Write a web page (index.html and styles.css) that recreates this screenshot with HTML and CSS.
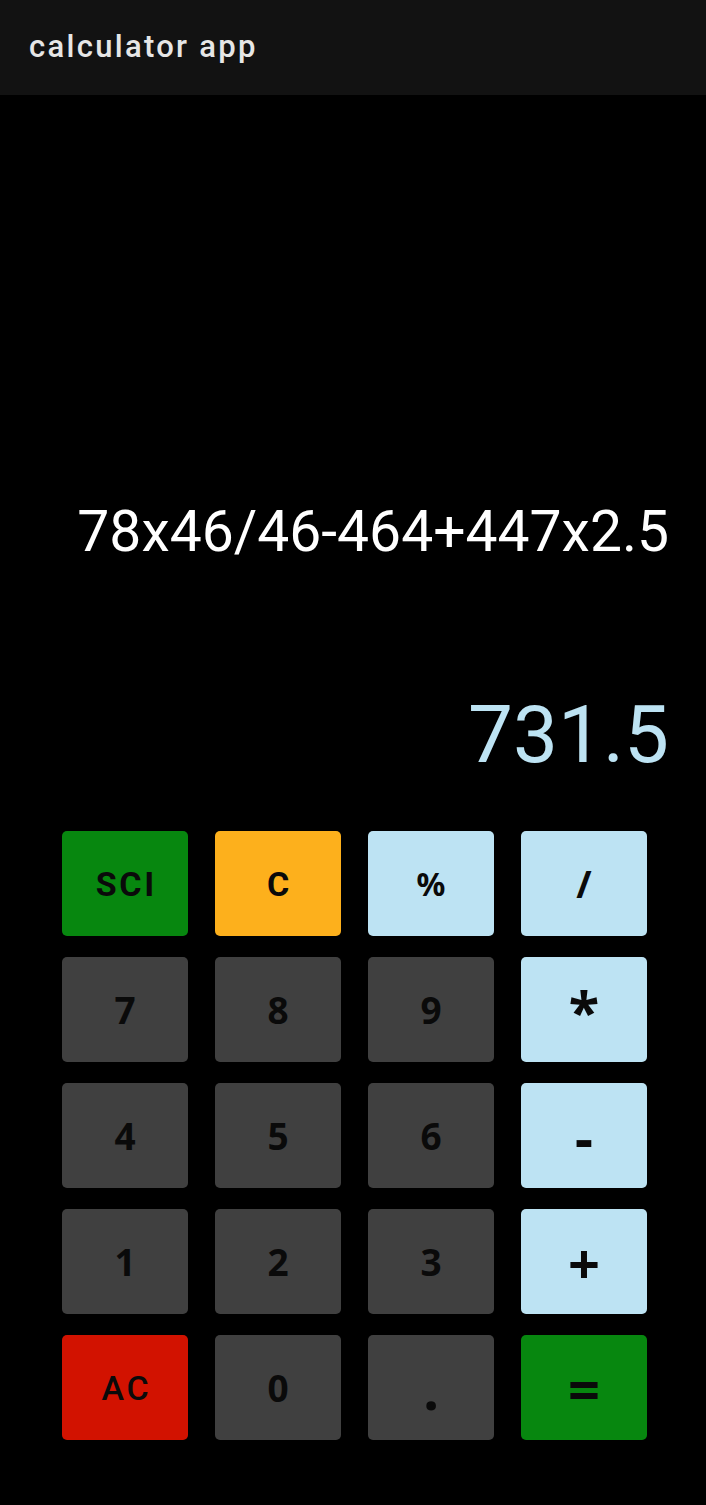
FILE: index.html
```html
<!DOCTYPE html>
<html lang="en">
<head>
<meta charset="utf-8">
<title>calculator app</title>
<link rel="stylesheet" href="styles.css">
</head>
<body>
<header class="app-bar">
  <h1 class="app-title">calculator app</h1>
</header>
<main class="calculator">
  <section class="display">
    <div class="expression">78x46/46-464+447x2.5</div>
    <div class="result">731.5</div>
  </section>
  <section class="keypad">
    <button class="key key-sci">SCI</button>
    <button class="key key-clear">C</button>
    <button class="key key-op key-pct">%</button>
    <button class="key key-op">/</button>

    <button class="key key-num">7</button>
    <button class="key key-num">8</button>
    <button class="key key-num">9</button>
    <button class="key key-op key-big">*</button>

    <button class="key key-num">4</button>
    <button class="key key-num">5</button>
    <button class="key key-num">6</button>
    <button class="key key-op key-big">-</button>

    <button class="key key-num">1</button>
    <button class="key key-num">2</button>
    <button class="key key-num">3</button>
    <button class="key key-op key-big">+</button>

    <button class="key key-ac">AC</button>
    <button class="key key-num">0</button>
    <button class="key key-num key-big">.</button>
    <button class="key key-equals key-big">=</button>
  </section>
</main>
</body>
</html>
```

FILE: styles.css
```css
* {
  box-sizing: border-box;
}

html, body {
  margin: 0;
  padding: 0;
  background: #000;
}

body {
  width: 706px;
  min-height: 1505px;
  font-family: Roboto, "Noto Sans", sans-serif;
}

.app-bar {
  height: 95px;
  background: #121212;
  display: flex;
  align-items: center;
  padding-left: 29px;
}

.app-title {
  margin: 0;
  font-size: 31px;
  font-weight: 500;
  letter-spacing: 2.3px;
  color: #e6e6e6;
  line-height: 1;
  padding-bottom: 3px;
}

.calculator {
  display: flex;
  flex-direction: column;
}

.display {
  display: flex;
  flex-direction: column;
  align-items: flex-end;
  padding: 403px 37px 0 0;
}

.expression {
  font-size: 57px;
  line-height: 68px;
  color: #fff;
  font-weight: 400;
}

.result {
  margin-top: 121px;
  font-size: 80px;
  line-height: 96px;
  color: #bde3f3;
  font-weight: 400;
}

.keypad {
  margin-top: 48px;
  padding-left: 62px;
  display: grid;
  grid-template-columns: repeat(4, 126px);
  grid-auto-rows: 105px;
  column-gap: 27px;
  row-gap: 21px;
}

.key {
  border: none;
  border-radius: 5px;
  margin: 0;
  padding: 0;
  font-family: "Noto Sans", sans-serif;
  font-size: 37px;
  font-weight: 700;
  color: #0a0a0a;
  display: flex;
  align-items: center;
  justify-content: center;
}

.key-sci,
.key-clear,
.key-ac {
  font-family: Roboto, "Noto Sans", sans-serif;
  font-size: 34px;
  letter-spacing: 0.08em;
  text-indent: 0.08em;
}

.key-pct {
  font-size: 32px;
}

.key-big {
  font-size: 56px;
}

.key-num {
  background: #404040;
}

.key-op {
  background: #bde3f3;
}

.key-sci,
.key-equals {
  background: #07870f;
}

.key-clear {
  background: #fdb01c;
}

.key-ac {
  background: #d21200;
  font-weight: 500;
}
```
